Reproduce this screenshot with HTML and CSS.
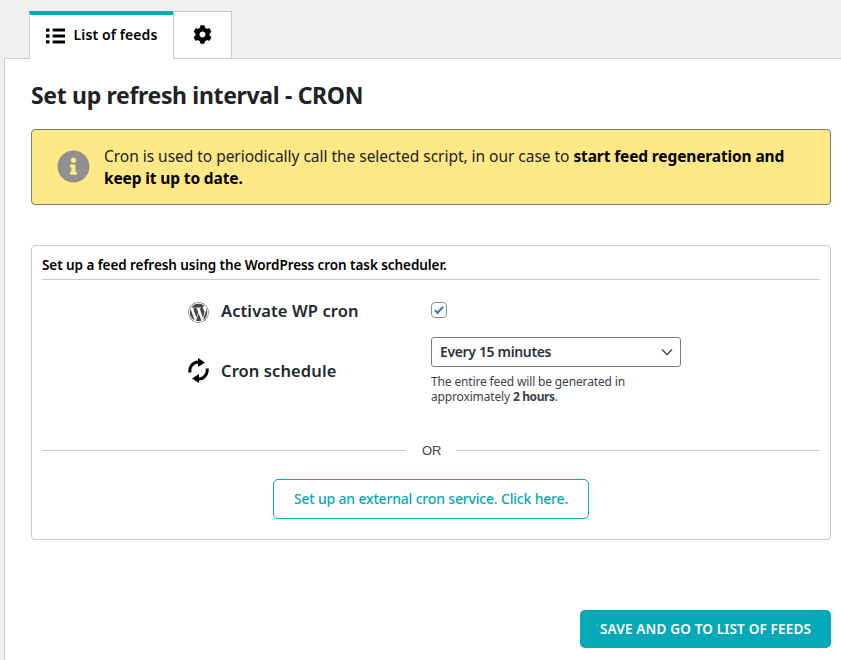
FILE: index.html
```html
<!DOCTYPE html>
<html lang="en">
<head>
<meta charset="utf-8">
<title>Set up refresh interval - CRON</title>
<link rel="stylesheet" href="styles.css">
</head>
<body>
<div class="tabs">
  <a class="tab tab-active">
    <svg class="icon-list" viewBox="0 0 19 16"><rect x="0" y="0.4" width="3.6" height="3.4" rx="0.8"/><rect x="0" y="6.3" width="3.6" height="3.4" rx="0.8"/><rect x="0" y="12.2" width="3.6" height="3.4" rx="0.8"/><rect x="6.6" y="0.5" width="12.4" height="3"/><rect x="6.6" y="6.5" width="12.4" height="3"/><rect x="6.6" y="12.5" width="12.4" height="3"/></svg>
    <span class="tab-label">List of feeds</span>
  </a>
  <a class="tab tab-settings">
    <svg class="icon-cog" viewBox="0 0 512 512"><path d="M487.4 315.7l-42.6-24.6c4.3-23.2 4.3-47 0-70.2l42.6-24.6c4.9-2.8 7.1-8.6 5.5-14-11.1-35.6-30-67.8-54.7-94.6-3.8-4.1-10-5.1-14.8-2.3L380.8 110c-17.9-15.4-38.5-27.3-60.8-35.1V25.8c0-5.6-3.9-10.5-9.4-11.7-36.7-8.2-74.3-7.8-109.2 0-5.5 1.2-9.4 6.1-9.4 11.7V75c-22.2 7.9-42.8 19.8-60.8 35.1L88.7 85.5c-4.9-2.8-11-1.9-14.8 2.3-24.7 26.7-43.6 58.9-54.7 94.6-1.7 5.4.6 11.2 5.5 14L67.3 221c-4.3 23.2-4.3 47 0 70.2l-42.6 24.6c-4.9 2.8-7.1 8.6-5.5 14 11.1 35.6 30 67.8 54.7 94.6 3.8 4.1 10 5.1 14.8 2.3l42.6-24.6c17.9 15.4 38.5 27.3 60.8 35.1v49.2c0 5.6 3.9 10.5 9.4 11.7 36.7 8.2 74.3 7.8 109.2 0 5.5-1.2 9.4-6.1 9.4-11.7v-49.2c22.2-7.9 42.8-19.8 60.8-35.1l42.6 24.6c4.9 2.8 11 1.9 14.8-2.3 24.7-26.7 43.6-58.9 54.7-94.6 1.5-5.5-.7-11.3-5.6-14.1zM256 336c-44.1 0-80-35.9-80-80s35.9-80 80-80 80 35.9 80 80-35.9 80-80 80z"/></svg>
  </a>
</div>
<main class="panel">
  <h1 class="title">Set up refresh interval - CRON</h1>
  <div class="notice">
    <svg class="icon-info" viewBox="0 0 512 512"><path d="M256 8C119.043 8 8 119.083 8 256c0 136.997 111.043 248 248 248s248-111.003 248-248C504 119.083 392.957 8 256 8zm0 110c23.196 0 42 18.804 42 42s-18.804 42-42 42-42-18.804-42-42 18.804-42 42-42zm56 254c0 6.627-5.373 12-12 12h-88c-6.627 0-12-5.373-12-12v-24c0-6.627 5.373-12 12-12h12v-64h-12c-6.627 0-12-5.373-12-12v-24c0-6.627 5.373-12 12-12h64c6.627 0 12 5.373 12 12v100h12c6.627 0 12 5.373 12 12v24z"/></svg>
    <p class="notice-text">Cron is used to periodically call the selected script, in our case to <strong>start feed regeneration and keep it up to date.</strong></p>
  </div>
  <section class="box">
    <h2 class="box-title">Set up a feed refresh using the WordPress cron task scheduler.</h2>
    <div class="form-grid">
      <div class="label label-first">
        <svg class="icon-wp" viewBox="0 0 512 512"><path d="M61.7 169.4l101.5 278C92.2 413 43.3 340.2 43.3 256c0-30.9 6.6-60.1 18.4-86.6zm337.9 75.9c0-26.3-9.4-44.5-17.5-58.7-10.8-17.5-20.9-32.4-20.9-49.9 0-19.6 14.8-37.8 35.7-37.8.9 0 1.8.1 2.8.2-37.9-34.7-88.3-55.9-143.7-55.9-74.3 0-139.7 38.1-177.8 95.9 5 .2 9.7.3 13.7.3 22.2 0 56.7-2.7 56.7-2.7 11.5-.7 12.8 16.2 1.4 17.5 0 0-11.5 1.3-24.3 2l77.5 230.4L249.8 247l-33.1-90.8c-11.5-.7-22.3-2-22.3-2-11.5-.7-10.1-18.2 1.3-17.5 0 0 35.1 2.7 56 2.7 22.2 0 56.7-2.7 56.7-2.7 11.5-.7 12.8 16.2 1.4 17.5 0 0-11.5 1.3-24.3 2l76.9 228.7 21.2-70.9c9-29.4 16-50.5 16-68.7zm-139.9 29.3l-63.8 185.5c19.1 5.6 39.2 8.7 60.1 8.7 24.8 0 48.5-4.3 70.6-12.1-.6-.9-1.1-1.9-1.5-2.9l-65.4-179.2zm183-120.7c.9 6.8 1.4 14 1.4 21.9 0 21.6-4 45.8-16.2 76.2l-65 187.9C426.2 403 468.7 334.5 468.7 256c0-37-9.4-71.8-26-102.1zM504 256c0 136.8-111.3 248-248 248C119.2 504 8 392.7 8 256 8 119.2 119.2 8 256 8c136.7 0 248 111.2 248 248zm-11.4 0c0-130.5-106.2-236.6-236.6-236.6C125.5 19.4 19.4 125.5 19.4 256S125.6 492.6 256 492.6c130.5 0 236.6-106.1 236.6-236.6z"/></svg>
        <span>Activate WP cron</span>
      </div>
      <div class="control control-check">
        <span class="checkbox"><svg viewBox="0 0 16 16"><path d="M3.2 8.4 6.3 11.4 12.6 4.2"/></svg></span>
      </div>
      <div class="label">
        <svg class="icon-sync" viewBox="0 0 21 25"><path class="sync-arc" d="M2 14.5A8.7 8.7 0 0 1 11 4"/><path class="sync-arc" d="M19 10.5A8.7 8.7 0 0 1 10 21"/><path d="M10 0 17 4.5 10 9zM11 16 4 20.5 11 25z"/></svg>
        <span>Cron schedule</span>
      </div>
      <div class="control">
        <div class="select-wrap">
          <select class="select"><option>Every 15 minutes</option></select>
          <svg class="chevron" viewBox="0 0 12 8"><path d="M1 1.5 6 6.5 11 1.5"/></svg>
        </div>
        <p class="hint">The entire feed will be generated in approximately <strong>2 hours</strong>.</p>
      </div>
    </div>
    <div class="divider"><span>OR</span></div>
    <div class="center"><a class="outline-btn">Set up an external cron service. Click here.</a></div>
  </section>
  <div class="actions"><a class="primary-btn">SAVE AND GO TO LIST OF FEEDS</a></div>
</main>
</body>
</html>
```
FILE: styles.css
```css
* { box-sizing: border-box; }
html, body { margin: 0; height: 660px; overflow: hidden; }
body { background: #f0f0f1; color: #1d2327; font-family: "Noto Sans", "Open Sans", sans-serif; font-size: 14px; }

.tabs { display: flex; padding: 11px 0 0 29px; height: 59px; position: relative; z-index: 1; }
.tab { display: flex; align-items: center; justify-content: center; background: #fff; border: 1px solid #ccc; }
.tab-active { width: 145px; height: 48px; gap: 9px; border-top: 4px solid #05a9b8; border-bottom: 0; padding-bottom: 3px; color: #000; font-size: 14px; font-weight: 600; letter-spacing: 0.1px; }
.tab-label { padding-bottom: 2px; }
.tab-settings { width: 59px; height: 47px; margin-left: -1px; border-bottom: 0; padding-bottom: 1px; }
.icon-list { width: 19px; height: 16px; }
.icon-cog { width: 19px; height: 19px; }

.panel { margin: -1px 0 0 4px; height: 602px; background: #fff; border-top: 1px solid #ccc; border-left: 1px solid #ccc; padding: 0 10px 0 26px; }
.title { margin: 0; padding-top: 19px; height: 70px; font-size: 23px; line-height: 34px; font-weight: 700; letter-spacing: -0.33px; color: #1d2327; }

.notice { display: flex; align-items: center; height: 76px; background: #ffe987; border: 1px solid #7b7b7b; border-radius: 4px; padding: 0 25px; gap: 14px; }
.icon-info { width: 33px; height: 33px; flex: none; fill: #909090; margin-top: -2px; }
.notice-text { margin: 0; font-size: 15.5px; line-height: 22px; color: #1d2327; letter-spacing: -0.03px; }
.notice-text strong { color: #000; letter-spacing: -0.13px; }

.box { margin-top: 40px; height: 295px; border: 1px solid #ccc; border-radius: 4px; padding: 10px 10px 0; }
.box-title { margin: 0; height: 24px; border-bottom: 1px solid #ccc; font-size: 13.5px; line-height: 18px; font-weight: 600; color: #000; letter-spacing: -0.07px; }

.form-grid { display: grid; grid-template-columns: 243px 250px; align-items: center; row-gap: 13px; padding: 20px 0 0 146px; }
.label { display: flex; align-items: center; gap: 12px; font-size: 16.5px; line-height: 20px; font-weight: 600; color: #23282d; letter-spacing: 0.1px; }
.label-first span { padding-bottom: 2px; }
.icon-wp { width: 21px; height: 21px; fill: #464646; }
.icon-sync { width: 21px; height: 25px; fill: #000; }
.sync-arc { fill: none; stroke: #000; stroke-width: 3; }
.control { min-width: 0; }
.control-check { height: 24px; }
.checkbox { display: block; width: 16px; height: 16px; margin-top: 2px; background: #fff; border: 1px solid #8c8f94; border-radius: 4px; }
.checkbox svg { display: block; width: 14px; height: 14px; fill: none; stroke: #2f7bc4; stroke-width: 2.4; }

.select-wrap { position: relative; width: 250px; }
.select { display: block; width: 100%; height: 30px; appearance: none; background: #fff; border: 1px solid #7b7b7b; border-radius: 3px; padding: 0 24px 2px 8px; font-family: inherit; font-size: 14px; font-weight: 600; letter-spacing: -0.35px; color: #2c3338; }
.chevron { position: absolute; right: 8px; top: 11px; width: 12px; height: 8px; fill: none; stroke: #50575e; stroke-width: 1.6; }
.hint { margin: 7px 0 0; font-size: 12px; line-height: 15px; color: #3c434a; letter-spacing: -0.15px; }
.hint strong { letter-spacing: -0.4px; }

.divider { display: flex; align-items: center; gap: 16px; margin-top: 36px; height: 20px; font-family: "Liberation Sans", sans-serif; font-size: 13px; color: #3c434a; }
.divider::before, .divider::after { content: ""; flex: 1; border-top: 1px solid #ccc; }
.divider span { width: 18px; text-align: center; }

.center { display: flex; justify-content: center; margin-top: 19px; }
.outline-btn { display: flex; align-items: center; justify-content: center; width: 316px; height: 40px; padding-bottom: 2px; border: 1px solid #05a9b8; border-radius: 5px; color: #05a9b8; font-size: 14px; font-weight: 500; letter-spacing: -0.18px; }

.actions { display: flex; justify-content: flex-end; margin-top: 70px; }
.primary-btn { display: flex; align-items: center; justify-content: center; width: 251px; height: 38px; background: #05a9b8; border-radius: 5px; color: #fff; font-size: 13.5px; font-weight: 600; letter-spacing: 0.18px; }
```
